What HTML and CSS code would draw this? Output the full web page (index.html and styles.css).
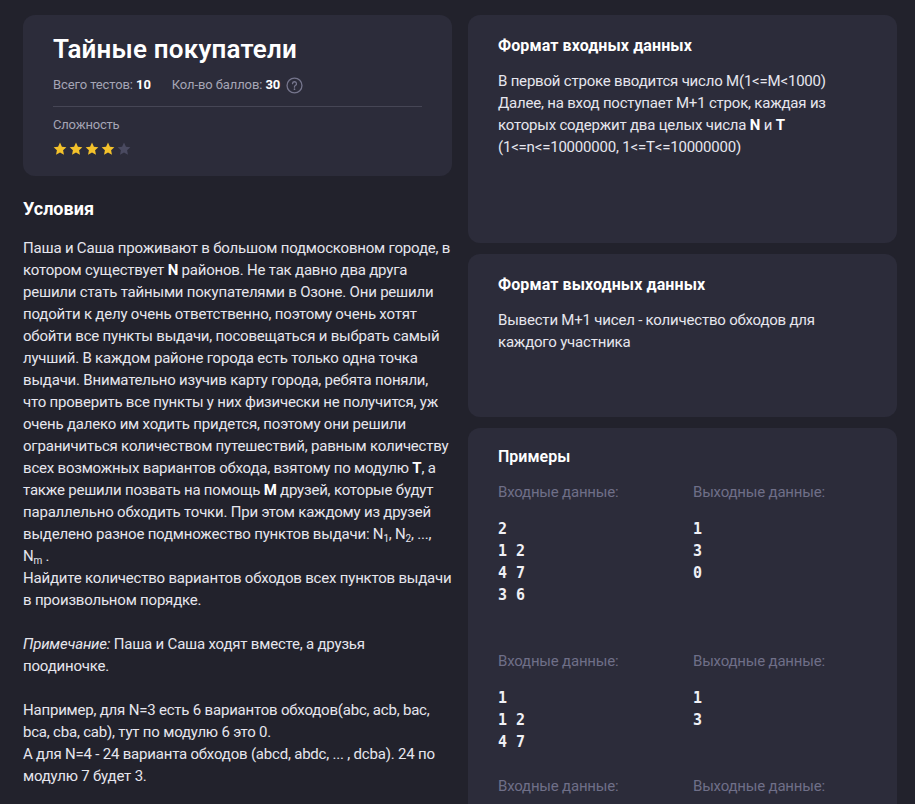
FILE: index.html
```html
<!DOCTYPE html>
<html lang="ru">
<head>
<meta charset="utf-8">
<title>Тайные покупатели</title>
<link rel="stylesheet" href="styles.css">
</head>
<body>
<div class="page">
  <div class="col">
    <section class="card head-card">
      <h1 class="title">Тайные покупатели</h1>
      <div class="meta">
        <span>Всего тестов: <b>10</b></span>
        <span class="meta-score">Кол-во баллов: <b>30</b></span>
        <svg class="help" width="17" height="17" viewBox="0 0 18 18"><circle cx="9" cy="9" r="7.9" fill="none" stroke="#75758c" stroke-width="1.4"/><path d="M6.9 7.1a2.1 2.1 0 1 1 3 1.9c-.6.3-.9.7-.9 1.3v.5" fill="none" stroke="#75758c" stroke-width="1.4" stroke-linecap="round"/><circle cx="9" cy="12.9" r=".9" fill="#75758c"/></svg>
      </div>
      <div class="divider"></div>
      <div class="diff-label">Сложность</div>
      <div class="stars">
        <svg class="star on" viewBox="0 0 24 24"><path d="M12 1l3.3 7 7.6.9-5.6 5.2 1.5 7.6L12 17.9l-6.8 3.8 1.5-7.6L1.1 8.9 8.7 8z"/></svg>
        <svg class="star on" viewBox="0 0 24 24"><path d="M12 1l3.3 7 7.6.9-5.6 5.2 1.5 7.6L12 17.9l-6.8 3.8 1.5-7.6L1.1 8.9 8.7 8z"/></svg>
        <svg class="star on" viewBox="0 0 24 24"><path d="M12 1l3.3 7 7.6.9-5.6 5.2 1.5 7.6L12 17.9l-6.8 3.8 1.5-7.6L1.1 8.9 8.7 8z"/></svg>
        <svg class="star on" viewBox="0 0 24 24"><path d="M12 1l3.3 7 7.6.9-5.6 5.2 1.5 7.6L12 17.9l-6.8 3.8 1.5-7.6L1.1 8.9 8.7 8z"/></svg>
        <svg class="star off" viewBox="0 0 24 24"><path d="M12 1l3.3 7 7.6.9-5.6 5.2 1.5 7.6L12 17.9l-6.8 3.8 1.5-7.6L1.1 8.9 8.7 8z"/></svg>
      </div>
    </section>

    <section class="conditions">
      <h2 class="cond-title">Условия</h2>
      <p class="text">Паша и Саша проживают в большом подмосковном городе, в котором существует <b>N</b> районов. Не так давно два друга решили стать тайными покупателями в Озоне. Они решили подойти к делу очень ответственно, поэтому очень хотят обойти все пункты выдачи, посовещаться и выбрать самый лучший. В каждом районе города есть только одна точка выдачи. Внимательно изучив карту города, ребята поняли, что проверить все пункты у них физически не получится, уж очень далеко им ходить придется, поэтому они решили ограничиться количеством путешествий, равным количеству всех возможных вариантов обхода, взятому по модулю <b>T</b>, а также решили позвать на помощь <b>M</b> друзей, которые будут параллельно обходить точки. При этом каждому из друзей выделено разное подмножество пунктов выдачи: N<sub>1</sub>, N<sub>2</sub>, ..., N<sub>m</sub> .<br>Найдите количество вариантов обходов всех пунктов выдачи в произвольном порядке.</p>
      <p class="text"><i>Примечание:</i> Паша и Саша ходят вместе, а друзья поодиночке.</p>
      <p class="text">Например, для N=3 есть 6 вариантов обходов(abc, acb, bac, bca, cba, cab), тут по модулю 6 это 0.<br>А для N=4 - 24 варианта обходов (abcd, abdc, ... , dcba). 24 по модулю 7 будет 3.</p>
    </section>
  </div>

  <div class="col">
    <section class="card fmt-card fmt-in">
      <h3 class="card-title">Формат входных данных</h3>
      <p class="text">В первой строке вводится число M(1&lt;=M&lt;1000)<br>Далее, на вход поступает M+1 строк, каждая из которых содержит два целых числа <b>N</b> и <b>T</b> (1&lt;=n&lt;=10000000, 1&lt;=T&lt;=10000000)</p>
    </section>
    <section class="card fmt-card fmt-out">
      <h3 class="card-title">Формат выходных данных</h3>
      <p class="text">Вывести M+1 чисел - количество обходов для каждого участника</p>
    </section>
    <section class="card examples">
      <h3 class="ex-title">Примеры</h3>
      <div class="example example-long">
        <div class="ex-col">
          <div class="ex-label">Входные данные:</div>
          <pre class="code">2
1 2
4 7
3 6</pre>
        </div>
        <div class="ex-col">
          <div class="ex-label">Выходные данные:</div>
          <pre class="code">1
3
0</pre>
        </div>
      </div>
      <div class="example">
        <div class="ex-col">
          <div class="ex-label">Входные данные:</div>
          <pre class="code">1
1 2
4 7</pre>
        </div>
        <div class="ex-col">
          <div class="ex-label">Выходные данные:</div>
          <pre class="code">1
3</pre>
        </div>
      </div>
      <div class="example">
        <div class="ex-col">
          <div class="ex-label">Входные данные:</div>
          <pre class="code">1
5 10</pre>
        </div>
        <div class="ex-col">
          <div class="ex-label">Выходные данные:</div>
          <pre class="code">0</pre>
        </div>
      </div>
    </section>
  </div>
</div>
</body>
</html>
```

FILE: styles.css
```css
* { box-sizing: border-box; }
html, body { margin: 0; padding: 0; }
body {
  background: #22222c;
  color: #e6e6ee;
  font-family: Roboto, "Noto Sans", sans-serif;
  font-size: 15px;
  line-height: 22px;
  letter-spacing: -0.2px;
  overflow: hidden;
  height: 804px;
}
.page {
  display: grid;
  grid-template-columns: 429px 429px;
  column-gap: 16px;
  padding: 15px 18px 0 23px;
}
.col { display: flex; flex-direction: column; gap: 11px; }
.card {
  background: #2c2c3a;
  border-radius: 12px;
}
.head-card { padding: 17px 30px 18px; height: 161px; }
.title {
  margin: 0;
  font-size: 26px;
  line-height: 34px;
  font-weight: 600;
  letter-spacing: 0.2px;
  color: #ffffff;
}
.meta {
  display: flex;
  align-items: center;
  margin-top: 10px;
  font-size: 13px;
  line-height: 18px;
  letter-spacing: -0.1px;
  color: #a5a5b5;
}
.meta b { color: #fff; font-weight: 700; }
.meta-score { margin-left: 21px; }
.help { margin-left: 6px; display: block; }
.divider { height: 1px; background: #464655; margin-top: 12px; }
.diff-label { margin-top: 9px; font-size: 13px; line-height: 18px; color: #a5a5b5; }
.stars { display: flex; gap: 2px; margin-top: 8px; }
.star { width: 14px; height: 14px; display: block; }
.star.on { fill: #f4c22b; }
.star.off { fill: #4a4a60; }

.conditions { padding-top: 10px; }
.cond-title {
  margin: 0;
  font-size: 18px;
  line-height: 24px;
  font-weight: 700;
  letter-spacing: 0;
  color: #fff;
}
.text { margin: 0; }
.conditions .text { margin-top: 22px; }
.conditions .text:first-of-type { margin-top: 16px; }
.text b { font-weight: 700; color: #fff; }
sub { font-size: 10px; line-height: 0; vertical-align: -3px; }

.fmt-card { padding: 20px 30px; }
.fmt-in { height: 228px; }
.fmt-out { height: 163px; }
.card-title {
  margin: 0 0 13px;
  font-size: 16px;
  line-height: 22px;
  font-weight: 700;
  letter-spacing: 0.1px;
  color: #fff;
}
.examples { padding: 18px 30px; flex: 1; }
.ex-title {
  margin: 0 0 13px;
  font-size: 16px;
  line-height: 22px;
  font-weight: 600;
  letter-spacing: 0;
  color: #fff;
}
.example {
  display: grid;
  grid-template-columns: 1fr 1fr;
  column-gap: 21px;
  margin-bottom: 22px;
}
.example-long { margin-bottom: 44px; }
.ex-label { color: #6f6f88; font-size: 15px; line-height: 22px; }
.code {
  margin: 15px 0 0;
  font-family: "DejaVu Sans Mono", monospace;
  font-weight: 700;
  font-size: 15px;
  line-height: 22px;
  letter-spacing: 0;
  color: #f0f0f5;
}
```
